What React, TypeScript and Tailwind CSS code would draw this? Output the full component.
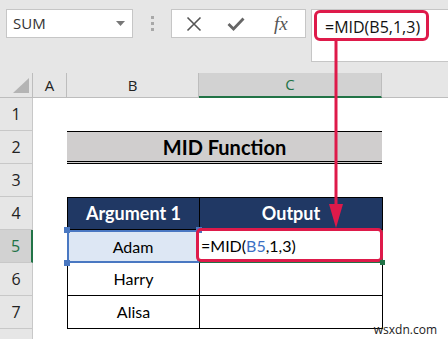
import React from "react";

const UI = { fontFamily: '"Open Sans", "Liberation Sans", sans-serif' };
const CELL = { fontFamily: 'Lato, "Liberation Sans", sans-serif' };

function RowHeader({ n, active }: { n?: number; active?: boolean }) {
  return (
    <div
      style={UI}
      className={
        "w-[33px] h-full shrink-0 flex items-center justify-center text-[16px] border-b border-[#c8c8c8] " +
        (active
          ? "bg-[#d2d2d2] text-[#217346] border-r-2 border-r-[#217346]"
          : "bg-[#e6e6e6] text-[#222] border-r border-r-[#c8c8c8]")
      }
    >
      {n}
    </div>
  );
}

export default function App() {
  return (
    <div className="relative w-[448px] h-[339px] overflow-hidden bg-white">
      {/* Formula bar */}
      <div className="h-[73px] bg-[#e6e6e6] flex items-start pt-[9px] pl-[6px]">
        <div
          style={UI}
          className="w-[127px] h-[29px] bg-white border border-[#c6c6c6] flex items-center justify-between pl-[6px] pr-[7px] text-[15px] text-[#333]"
        >
          <span>SUM</span>
          <svg width="9" height="5" viewBox="0 0 9 5">
            <polygon points="0,0 9,0 4.5,5" fill="#777" />
          </svg>
        </div>
        <div className="w-[38px] h-[29px] flex flex-col items-center justify-center gap-[3px]">
          <div className="w-[3px] h-[3px] bg-[#a8a8a8]" />
          <div className="w-[3px] h-[3px] bg-[#a8a8a8]" />
          <div className="w-[3px] h-[3px] bg-[#a8a8a8]" />
        </div>
        <div className="w-[135px] h-[29px] bg-white border border-[#c6c6c6] flex items-center">
          <div className="w-[44px] flex justify-center">
            <svg width="16" height="16" viewBox="0 0 16 16">
              <path d="M1.5 1.5 L14.5 14.5 M14.5 1.5 L1.5 14.5" stroke="#555" strokeWidth="1.6" fill="none" />
            </svg>
          </div>
          <div className="w-[42px] flex justify-center">
            <svg width="18" height="14" viewBox="0 0 18 14">
              <path d="M1.5 7 L6.5 12 L16.5 1.5" stroke="#666" strokeWidth="2.8" fill="none" />
            </svg>
          </div>
          <div
            className="w-[49px] flex justify-center text-[19px] italic text-[#555] leading-none"
            style={{ fontFamily: '"Liberation Serif", "DejaVu Serif", serif' }}
          >
            fx
          </div>
        </div>
        <div className="ml-[5px] flex-1 h-[53px] bg-white border border-r-0 border-[#c6c6c6] flex items-start pt-[6px] pl-[13px]">
          <span style={UI} className="text-[16px] text-[#111] leading-[22px]">
            =MID(B5,1,3)
          </span>
        </div>
      </div>

      {/* Column headers */}
      <div style={UI} className="h-[25px] flex bg-[#e6e6e6] text-[15px] text-[#222]">
        <div className="w-[33px] h-full border-r border-b border-[#bdbdbd] flex items-end justify-end pr-[3px] pb-[4px]">
          <svg width="16" height="15" viewBox="0 0 16 15">
            <polygon points="16,0 16,15 0,15" fill="#b4b4b4" />
          </svg>
        </div>
        <div className="w-[34px] h-full border-r border-b border-[#bdbdbd] flex items-center justify-center">A</div>
        <div className="w-[132px] h-full border-r border-b border-[#bdbdbd] flex items-center justify-center">B</div>
        <div className="w-[183px] h-full bg-[#d2d2d2] border-r border-r-[#bdbdbd] border-b-2 border-b-[#217346] flex items-center justify-center text-[#217346]">
          C
        </div>
        <div className="flex-1 h-full border-b border-[#bdbdbd]" />
      </div>

      {/* Row 1 */}
      <div className="h-[33px] flex">
        <RowHeader n={1} />
      </div>

      {/* Row 2 */}
      <div className="h-[33px] flex">
        <RowHeader n={2} />
        <div className="w-[34px]" />
        <div
          style={CELL}
          className="w-[315px] h-full bg-[#d0cece] border-t border-black border-b-[3px] border-b-black border-double flex items-center justify-center text-[20px] font-bold text-black"
        >
          MID Function
        </div>
      </div>

      {/* Row 3 */}
      <div className="h-[33px] flex">
        <RowHeader n={3} />
      </div>

      {/* Row 4 */}
      <div className="h-[33px] flex">
        <RowHeader n={4} />
        <div className="w-[34px]" />
        <div
          style={CELL}
          className="w-[132px] h-full bg-[#203864] border border-r-0 border-black flex items-center justify-center text-[18px] font-bold text-white"
        >
          Argument 1
        </div>
        <div
          style={CELL}
          className="w-[184px] h-full bg-[#203864] border border-black flex items-center justify-center text-[18px] font-bold text-white"
        >
          Output
        </div>
      </div>

      {/* Row 5 */}
      <div className="h-[33px] flex">
        <RowHeader n={5} active />
        <div className="w-[34px]" />
        <div
          style={CELL}
          className="relative w-[132px] h-full bg-[#dde7f4] flex items-center justify-center text-[16px] text-black"
        >
          Adam
          <div className="absolute inset-0 border-2 border-[#4a78c2]" />
          <div className="absolute left-[-3px] top-[-3px] w-[6px] h-[6px] bg-[#4a78c2]" />
          <div className="absolute left-[-3px] bottom-[-3px] w-[6px] h-[6px] bg-[#4a78c2]" />
          <div className="absolute right-[-3px] top-[-3px] w-[6px] h-[6px] bg-[#4a78c2]" />
        </div>
        <div
          style={CELL}
          className="relative w-[184px] h-full border-r-2 border-b-2 border-[#217346] flex items-center pl-[2px] text-[16px] text-black"
        >
          <span>
            =MID(<span className="text-[#3b6fc4]">B5</span>,1,3)
          </span>
          <div className="absolute left-[-3px] top-[-2px] right-[-2px] bottom-[-1px] border-[3px] border-[#de1a4a] rounded-[5px]" />
          <div className="absolute right-[-4px] bottom-[-4px] w-[5px] h-[5px] bg-[#217346]" />
        </div>
      </div>

      {/* Row 6 */}
      <div className="h-[33px] flex">
        <RowHeader n={6} />
        <div className="w-[34px]" />
        <div
          style={CELL}
          className="w-[132px] h-full border-l border-b border-black flex items-center justify-center text-[16px] text-black"
        >
          Harry
        </div>
        <div className="w-[184px] h-full border-l border-r border-b border-black" />
      </div>

      {/* Row 7 */}
      <div className="h-[33px] flex">
        <RowHeader n={7} />
        <div className="w-[34px]" />
        <div
          style={CELL}
          className="w-[132px] h-full border-l border-b border-black flex items-center justify-center text-[16px] text-black"
        >
          Alisa
        </div>
        <div className="w-[184px] h-full border-l border-r border-b border-black" />
      </div>

      {/* Row 8 (only its top edge is visible) */}
      <div className="h-[33px] flex">
        <RowHeader />
      </div>

      {/* Formula bar highlight */}
      <div className="absolute left-[314px] top-[10px] w-[115px] h-[31px] border-[3px] border-[#de1a4a] rounded-[6px]" />

      {/* Arrow */}
      <svg className="absolute left-0 top-0 pointer-events-none" width="448" height="339" viewBox="0 0 448 339">
        <line x1="336" y1="41" x2="336" y2="208" stroke="#de1a4a" strokeWidth="3" />
        <polygon points="329,204 343,204 336,228" fill="#de1a4a" />
      </svg>

      {/* Watermark */}
      <div
        style={UI}
        className="absolute right-[11px] bottom-[3px] text-[12px] text-[#222] leading-none"
      >
        wsxdn.com
      </div>
    </div>
  );
}
